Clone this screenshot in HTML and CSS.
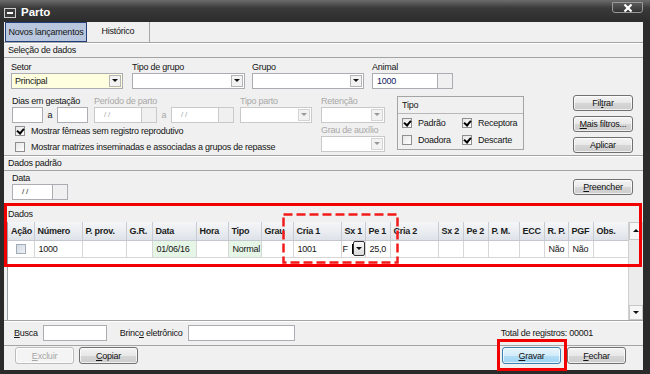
FILE: index.html
```html
<!DOCTYPE html>
<html lang="pt-BR">
<head>
    <meta charset="UTF-8">
    <meta name="viewport" content="width=device-width, initial-scale=1.0">
    <title>Parto</title>
    <link rel="stylesheet" href="styles.css">
</head>
<body>
    <div class="window">
        <div class="titlebar">
            <span class="sys-icon"></span>
            <span class="title">Parto</span>
            <span class="close-btn">
                <svg width="12" height="8" viewBox="0 0 12 8"><path d="M2.5 0.5 L9.5 7.5 M9.5 0.5 L2.5 7.5" stroke="#fff" stroke-width="2.2"/></svg>
            </span>
        </div>

        <div class="client">
            <div class="tabs">
                <div class="tab active">Novos lançamentos</div>
                <div class="tab">Histórico</div>
            </div>

            <div class="section-head">Seleção de dados</div>
            <div class="selection">
                <div class="sel-fields">
                    <div class="row1">
                        <div class="field f-setor">
                            <label>Setor</label>
                            <div class="select yellow"><span>Principal</span><i class="drop"></i></div>
                        </div>
                        <div class="field f-tipogrupo">
                            <label>Tipo de grupo</label>
                            <div class="select"><span></span><i class="drop"></i></div>
                        </div>
                        <div class="field f-grupo">
                            <label>Grupo</label>
                            <div class="select"><span></span><i class="drop"></i></div>
                        </div>
                        <div class="field f-animal">
                            <label>Animal</label>
                            <div class="combo">
                                <div class="input animal-input">1000</div>
                                <div class="side-box"></div>
                            </div>
                        </div>
                    </div>

                    <div class="row2">
                        <div class="ranges">
                            <div class="field f-dias">
                                <label>Dias em gestação</label>
                                <div class="combo">
                                    <div class="input small"></div>
                                    <span class="sep">a</span>
                                    <div class="input small"></div>
                                </div>
                            </div>
                            <div class="field f-periodo disabled">
                                <label>Período de parto</label>
                                <div class="combo">
                                    <div class="input date">/ /</div>
                                    <div class="side-box"></div>
                                    <span class="sep">a</span>
                                    <div class="input date">/ /</div>
                                    <div class="side-box"></div>
                                </div>
                            </div>
                        </div>
                        <div class="field f-tipoparto disabled">
                            <label>Tipo parto</label>
                            <div class="select"><span></span><i class="drop"></i></div>
                        </div>
                        <div class="field f-retencao disabled">
                            <label>Retenção</label>
                            <div class="select"><span></span><i class="drop"></i></div>
                        </div>
                        <div class="checks">
                            <div class="check on"><i class="box"></i>Mostrar fêmeas sem registro reprodutivo</div>
                            <div class="check"><i class="box"></i>Mostrar matrizes inseminadas e associadas a grupos de repasse</div>
                        </div>
                        <div class="field f-grau disabled">
                            <label>Grau de auxílio</label>
                            <div class="select"><span></span><i class="drop"></i></div>
                        </div>
                        <div class="tipo-box">
                            <div class="tipo-head">Tipo</div>
                            <div class="tipo-grid">
                                <div class="check on"><i class="box"></i>Padrão</div>
                                <div class="check on"><i class="box"></i>Receptora</div>
                                <div class="check"><i class="box"></i>Doadora</div>
                                <div class="check on"><i class="box"></i>Descarte</div>
                            </div>
                        </div>
                    </div>
                </div>

                <div class="sel-buttons">
                    <button class="btn">Fil<u>t</u>rar</button>
                    <button class="btn"><u>M</u>ais filtros...</button>
                    <button class="btn">Aplicar</button>
                </div>
            </div>

            <div class="section-head">Dados padrão</div>
            <div class="padrao">
                <div class="field f-data">
                    <label>Data</label>
                    <div class="combo">
                        <div class="input date">/ /</div>
                        <div class="side-box"></div>
                    </div>
                </div>
                <button class="btn preencher"><u>P</u>reencher</button>
            </div>

            <div class="dados">
                <div class="dados-label">Dados</div>
                <div class="grid">
                    <div class="grid-body">
                        <table>
                            <colgroup>
                                <col style="width:26px"><col style="width:48px"><col style="width:44px">
                                <col style="width:26px"><col style="width:44px"><col style="width:32px">
                                <col style="width:33px"><col style="width:32px"><col style="width:48px">
                                <col style="width:24px"><col style="width:25px"><col style="width:48px">
                                <col style="width:25px"><col style="width:25px"><col style="width:31px">
                                <col style="width:25px"><col style="width:24px"><col style="width:25px">
                                <col style="width:36px">
                            </colgroup>
                            <thead>
                                <tr>
                                    <th>Ação</th><th>Número</th><th>P. prov.</th><th>G.R.</th><th>Data</th>
                                    <th>Hora</th><th>Tipo</th><th>Grau</th><th>Cria 1</th><th>Sx 1</th>
                                    <th>Pe 1</th><th>Cria 2</th><th>Sx 2</th><th>Pe 2</th><th>P. M.</th>
                                    <th>ECC</th><th>R. P.</th><th>PGF</th><th>Obs.</th>
                                </tr>
                            </thead>
                            <tbody>
                                <tr>
                                    <td class="center"><i class="row-check"></i></td>
                                    <td>1000</td><td></td><td></td>
                                    <td class="green">01/06/16</td>
                                    <td></td>
                                    <td class="green">Normal</td>
                                    <td></td>
                                    <td>1001</td>
                                    <td class="sx-cell"><span class="sx-val">F</span><span class="cell-drop"></span></td>
                                    <td>25,0</td>
                                    <td></td><td></td><td></td><td></td><td></td>
                                    <td>Não</td><td>Não</td><td></td>
                                </tr>
                            </tbody>
                        </table>
                    </div>
                    <div class="vscroll">
                        <div class="arrow up"></div>
                        <div class="track"></div>
                        <div class="arrow down"></div>
                    </div>
                </div>
            </div>

            <div class="search-row">
                <label><u>B</u>usca</label>
                <div class="input busca"></div>
                <label class="brinco-label">Brinc<u>o</u> eletrônico</label>
                <div class="input brinco"></div>
                <span class="total">Total de registros: 00001</span>
            </div>

            <div class="button-row">
                <button class="btn disabled-btn"><u>E</u>xcluir</button>
                <button class="btn copiar"><u>C</u>opiar</button>
                <button class="btn gravar"><u>G</u>ravar</button>
                <button class="btn fechar"><u>F</u>echar</button>
            </div>
        </div>

        <svg class="marks" width="650" height="374" viewBox="0 0 650 374">
            <rect x="5.5" y="204.5" width="635" height="61" fill="none" stroke="#f20000" stroke-width="3"/>
            <rect x="283.5" y="214.5" width="114" height="48" fill="none" stroke="#f21a1a" stroke-width="2.5" stroke-dasharray="9 4"/>
            <rect x="498.5" y="340.5" width="67" height="29" fill="none" stroke="#f20000" stroke-width="3"/>
        </svg>
    </div>
</body>
</html>
```

FILE: styles.css
```css
* {
    box-sizing: border-box;
}

body {
    margin: 0;
    background: #222;
    font-family: "Liberation Sans", Arial, sans-serif;
    font-size: 9px;
    letter-spacing: -0.25px;
    color: #151515;
}

.window {
    position: relative;
    width: 650px;
    height: 374px;
    display: flex;
    flex-direction: column;
    background: linear-gradient(#6c6c6c, #3a3a3a 8px, #2c2c2c 22px, #2a2a2a);
}

/* title bar */
.titlebar {
    height: 22px;
    flex: none;
    display: flex;
    align-items: center;
    padding: 0 7px 0 4px;
}

.sys-icon {
    position: relative;
    width: 12px;
    height: 10px;
    margin-top: 3px;
    border: 1px solid #d0d0d0;
    background: #3c3c3c;
}

.sys-icon::after {
    content: "";
    position: absolute;
    left: 2px;
    top: 3px;
    width: 6px;
    height: 2px;
    background: #fff;
}

.title {
    margin-left: 5px;
    margin-top: 2px;
    color: #fff;
    font-size: 11.5px;
    font-weight: bold;
    letter-spacing: 0;
}

.close-btn {
    margin-left: auto;
    align-self: flex-start;
    margin-top: 2px;
    width: 31px;
    height: 11px;
    display: flex;
    align-items: center;
    justify-content: center;
    border: 1px solid #9a9a9a;
    border-radius: 0 0 3px 3px;
    background: linear-gradient(#5a5a5a, #333);
}

/* client area */
.client {
    flex: 1;
    margin: 0 7px 4px 4px;
    background: #f0f0f0;
    display: flex;
    flex-direction: column;
}

.tabs {
    height: 20px;
    flex: none;
    display: flex;
    align-items: flex-end;
}

.tab {
    height: 20px;
    line-height: 18px;
    text-align: center;
    white-space: nowrap;
}

.tab.active {
    margin-left: 1px;
    width: 82px;
    border: 1px solid #23407d;
    background: #b8c7de;
}

.tab:not(.active) {
    width: 63px;
    border-right: 1px solid #a8a8a8;
}

.section-head {
    height: 16px;
    flex: none;
    padding-left: 4px;
    line-height: 14px;
    border-top: 1px solid #a4a4a4;
    border-bottom: 1px solid #a4a4a4;
    box-shadow: inset 0 1px #fff;
}

/* form controls */
.field {
    display: flex;
    flex-direction: column;
}

.field label {
    height: 12px;
    line-height: 12px;
    white-space: nowrap;
}

.field.disabled label,
.field.disabled .sep,
.field.disabled .input {
    color: #a8a8a8;
}

.select,
.input,
.side-box {
    height: 16px;
    border: 1px solid #abadb3;
    background: #fff;
}

.select {
    display: flex;
    align-items: center;
    justify-content: space-between;
    padding-left: 3px;
}

.select.yellow {
    background: #ffffdf;
}

.drop {
    position: relative;
    width: 12px;
    height: 12px;
    margin-right: 1px;
    border: 1px solid #b4b4b4;
    background: #f2f2f2;
}

.drop::after {
    content: "";
    position: absolute;
    left: 2px;
    top: 3px;
    border-left: 3px solid transparent;
    border-right: 3px solid transparent;
    border-top: 3px solid #111;
}

.disabled .select {
    border-color: #c9c9c9;
}

.disabled .drop {
    border-color: #d4d4d4;
}

.disabled .drop::after {
    border-top-color: #999;
}

.input {
    padding-left: 4px;
    line-height: 14px;
}

.combo {
    display: flex;
    align-items: center;
}

.side-box {
    width: 15px;
    border-left: none;
    background: #f0f0f0;
}

.disabled .input,
.disabled .side-box {
    border-color: #c9c9c9;
}

.sep {
    width: 14px;
    text-align: center;
}

/* selection panel */
.selection {
    height: 97px;
    flex: none;
    display: flex;
    padding: 3px 0 0 7px;
}

.sel-fields {
    width: 517px;
}

.row1 {
    display: flex;
}

.f-setor { width: 112px; }
.f-tipogrupo { width: 113px; margin-left: 9px; }
.f-grupo { width: 112px; margin-left: 7px; }
.f-animal { margin-left: 8px; }
.animal-input { width: 66px; color: #102060; }

.row2 {
    margin-top: 6px;
    display: grid;
    grid-template-columns: 229px 81px 76px 127px;
    grid-template-rows: 28px 32px;
}

.ranges {
    display: flex;
}

.f-dias { margin-left: 1px; }
.input.small { width: 31px; }
.f-periodo { margin-left: 6px; }
.input.date { width: 48px; padding-left: 9px; font-size: 8px; }

.f-tipoparto .select { width: 72px; }
.f-retencao .select,
.f-grau .select { width: 64px; }

.checks {
    grid-column: 1 / 3;
    grid-row: 2;
    margin-left: 4px;
}

.check {
    height: 16px;
    display: flex;
    align-items: center;
    white-space: nowrap;
}

.check .box {
    position: relative;
    width: 10px;
    height: 10px;
    margin-right: 6px;
    border: 1px solid #8f8f8f;
    background: linear-gradient(135deg, #e6e6e6, #fff);
}

.check.on .box::after {
    content: "";
    position: absolute;
    left: 2px;
    top: 0;
    width: 3px;
    height: 5px;
    border-right: 2px solid #000;
    border-bottom: 2px solid #000;
    transform: rotate(40deg);
}

.f-grau {
    grid-column: 3;
    grid-row: 2;
    margin-top: 1px;
}

.tipo-box {
    grid-column: 4;
    grid-row: 1 / 3;
    margin-top: 1px;
    height: 54px;
    border: 1px solid #a4a4a4;
}

.tipo-head {
    height: 17px;
    line-height: 16px;
    padding-left: 4px;
    border-bottom: 1px solid #b8b8b8;
}

.tipo-grid {
    display: grid;
    grid-template-columns: 60px 60px;
    padding: 1px 0 0 4px;
    row-gap: 1px;
}

.sel-buttons {
    margin-left: auto;
    margin-right: 10px;
    padding-top: 34px;
    display: flex;
    flex-direction: column;
    gap: 5px;
}

/* buttons */
.btn {
    width: 60px;
    height: 16px;
    padding: 0;
    font: inherit;
    letter-spacing: inherit;
    color: #111;
    border: 1px solid #707070;
    border-radius: 3px;
    background: linear-gradient(#f4f4f4, #e8e8e8 50%, #d6d6d6 51%, #cdcdcd);
    box-shadow: inset 0 0 0 1px rgba(255,255,255,0.7);
}

.btn u {
    text-underline-offset: 1px;
}

/* dados padrão */
.padrao {
    height: 32px;
    flex: none;
    display: flex;
    padding: 1px 10px 0 8px;
}

.f-data .combo .input.date {
    width: 41px;
    color: #222;
}

.preencher {
    margin-left: auto;
    margin-top: 7px;
}

/* data grid */
.dados {
    height: 117px;
    flex: none;
    padding: 5px 0 0 3px;
}

.dados-label {
    height: 14px;
    line-height: 12px;
    padding-left: 1px;
}

.grid {
    display: flex;
    height: 98px;
    border-left: 1px solid #9aa0a8;
    background: #fff;
}

.grid-body {
    flex: 1;
    overflow: hidden;
}

table {
    table-layout: fixed;
    border-collapse: collapse;
    width: 620px;
}

th {
    height: 18px;
    padding: 0 0 0 3px;
    text-align: left;
    font-weight: bold;
    white-space: nowrap;
    overflow: hidden;
    color: #1c1c1c;
    border-right: 1px solid #c8ccd2;
    border-bottom: 1px solid #c4c8ce;
    background: linear-gradient(#f3f5f7, #e9ecf0 55%, #dde2e8);
}

td {
    height: 17px;
    padding: 0 0 0 4px;
    white-space: nowrap;
    overflow: hidden;
    border-right: 1px solid #d6d6d6;
    border-bottom: 1px solid #d6d6d6;
}

td.center {
    text-align: center;
    padding: 0;
}

td.green {
    background: #e6f6e6;
}

.row-check {
    display: inline-block;
    width: 10px;
    height: 10px;
    margin-top: 3px;
    border: 1px solid #a3abb6;
    background: linear-gradient(135deg, #d2dae4, #eef1f5);
}

.sx-cell {
    padding: 0 0 0 1px;
}

.sx-val {
    display: inline-block;
    width: 10px;
    border-right: 1px solid #000;
    line-height: 10px;
    vertical-align: middle;
}

.cell-drop {
    position: relative;
    display: inline-block;
    width: 12px;
    height: 15px;
    vertical-align: middle;
    border: 1px solid #333;
    border-radius: 2px;
    background: linear-gradient(#fafafa, #dadada);
}

.cell-drop::after {
    content: "";
    position: absolute;
    left: 2px;
    top: 5px;
    border-left: 3px solid transparent;
    border-right: 3px solid transparent;
    border-top: 3px solid #111;
}

.vscroll {
    width: 15px;
    display: flex;
    flex-direction: column;
    border-left: 1px solid #d0d0d0;
    background: #ececec;
}

.vscroll .arrow {
    position: relative;
    height: 15px;
    border: 1px solid #c8c8c8;
    background: #f6f6f6;
}

.vscroll .up {
    height: 18px;
}

.vscroll .track {
    flex: 1;
}

.vscroll .arrow::after {
    content: "";
    position: absolute;
    left: 3px;
    border-left: 3px solid transparent;
    border-right: 3px solid transparent;
}

.vscroll .up::after {
    top: 6px;
    border-bottom: 3px solid #111;
}

.vscroll .down::after {
    top: 5px;
    border-top: 3px solid #111;
}

/* bottom rows */
.search-row {
    height: 26px;
    flex: none;
    display: flex;
    align-items: center;
    padding: 0 10px 0 10px;
    border-top: 1px solid #a4a4a4;
    border-bottom: 1px solid #a4a4a4;
    box-shadow: inset 0 1px #fff;
}

.input.busca {
    width: 64px;
    margin-left: 5px;
}

.brinco-label {
    margin-left: 13px;
}

.input.brinco {
    width: 107px;
    margin-left: 5px;
}

.total {
    margin-left: auto;
    margin-right: 40px;
}

.button-row {
    flex: 1;
    display: flex;
    align-items: flex-start;
    padding: 1px 17px 0 11px;
    gap: 5px;
}

.button-row .btn {
    width: 59px;
    height: 17px;
}

.disabled-btn {
    color: #a6a6a6;
    border-color: #bcbcbc;
    background: #f4f4f4;
}

.gravar {
    margin-left: auto;
    border-color: #3c7fb1;
    background: linear-gradient(#e6f4fc, #d2ecfa 50%, #b4def6 51%, #9ed3f1);
}

.fechar {
    margin-left: 1px;
}

/* red annotations drawn over the screenshot */
.marks {
    position: absolute;
    left: 0;
    top: 0;
    pointer-events: none;
}
```
